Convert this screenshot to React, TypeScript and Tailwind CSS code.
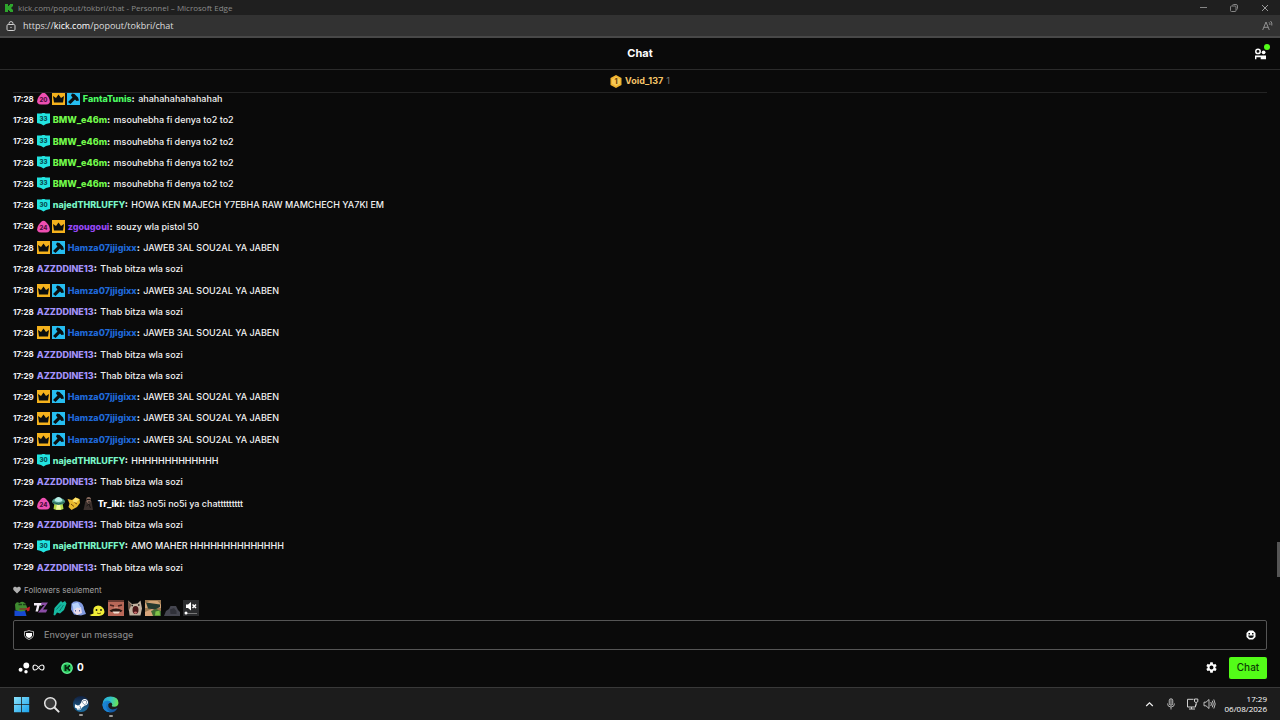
import type { ReactNode } from "react";
import { FaSteamSymbol } from "react-icons/fa";
import { MdSettings } from "react-icons/md";

type BadgeKind = "blob20" | "blob24" | "crown" | "hammer" | "shield33" | "shield30" | "alien" | "gold" | "figure";

const INK = "#0b0e0f";

function Blob({ n }: { n: string }) {
  return (
    <svg viewBox="0 0 26 26" className="size-[13px] shrink-0" aria-hidden="true">
      <path d="M8 4Q13 -1 18 4L23 10Q27 17 25 22Q23 25 18 25H8Q3 25 1 22Q-1 17 3 10Z" fill="#ee4fb2" />
      <text x="13" y="19" textAnchor="middle" fontSize="12" fontWeight="800" fontFamily="Inter, sans-serif" fill="#4b0b3c">{n}</text>
    </svg>
  );
}

function Shield({ n }: { n: string }) {
  return (
    <svg viewBox="0 0 26 26" className="size-[13px] shrink-0" aria-hidden="true">
      <path d="M0 1H9L11 0H15L17 1H26V20L18 22L13 25L8 22L0 20Z" fill="#22e4e0" />
      <text x="13" y="15" textAnchor="middle" fontSize="12" fontWeight="800" fontFamily="Inter, sans-serif" fill="#06474c">{n}</text>
    </svg>
  );
}

function Badge({ kind }: { kind: BadgeKind }) {
  switch (kind) {
    case "blob20":
      return <Blob n="20" />;
    case "blob24":
      return <Blob n="24" />;
    case "shield33":
      return <Shield n="33" />;
    case "shield30":
      return <Shield n="30" />;
    case "crown":
      return (
        <svg viewBox="0 0 26 26" className="size-[13px] shrink-0" aria-hidden="true">
          <path d="M0 0H26V26H0Z" fill="#f5b21c" />
          <path d="M2 8L8 12L13 5L18 12L24 8L22 21H4Z" fill={INK} />
        </svg>
      );
    case "hammer":
      return (
        <svg viewBox="0 0 26 26" className="size-[13px] shrink-0" aria-hidden="true">
          <path d="M0 0H26V26H0Z" fill="#26bdf0" />
          <path d="M10 3L15 4L22 11L24 17L19 18L16 15L7 24L2 20L11 11L8 7Z" fill={INK} />
        </svg>
      );
    case "alien":
      return (
        <svg viewBox="0 0 26 26" className="size-[13px] shrink-0" aria-hidden="true">
          <path d="M5 12H21L23 24L17 26H9L3 24Z" fill="#b8dc4a" />
          <path d="M10 14H16L18 25H8Z" fill="#f4f7a0" />
          <ellipse cx="13" cy="9" rx="13" ry="7" fill="#4d9a86" />
          <path d="M5 8Q7 0 13 0Q19 0 21 8Q13 12 5 8Z" fill="#b6ede5" />
          <path d="M2 11Q13 17 24 11" stroke="#245c50" strokeWidth="2" fill="none" />
        </svg>
      );
    case "gold":
      return (
        <svg viewBox="0 0 26 26" className="size-[13px] shrink-0" aria-hidden="true">
          <path d="M1 4L10 6L17 1L25 4L26 12L20 20L9 26L3 20L5 13Z" fill="#e9b92d" />
          <path d="M11 8L17 1L25 5L17 12Z" fill="#ffe56f" />
          <path d="M8 14L14 19M15 11L20 14" stroke="#7b4d0c" strokeWidth="2" />
        </svg>
      );
    case "figure":
      return (
        <svg viewBox="0 0 26 26" className="size-[13px] shrink-0" aria-hidden="true">
          <path d="M7 8L19 8L22 26H3Z" fill="#3b302d" />
          <path d="M9 2Q14-2 18 3L17 10L13 14L9 9Z" fill="#86695d" />
          <path d="M10 5H17M12 10H16M9 18L14 14L17 22" stroke="#191514" strokeWidth="2" fill="none" />
        </svg>
      );
  }
}

type User = { name: string; color: string; badges: BadgeKind[] };

const fanta: User = { name: "FantaTunis", color: "text-[#4cfb62]", badges: ["blob20", "crown", "hammer"] };
const bmw: User = { name: "BMW_e46m", color: "text-[#72f94b]", badges: ["shield33"] };
const najed: User = { name: "najedTHRLUFFY", color: "text-[#79f5c6]", badges: ["shield30"] };
const zgou: User = { name: "zgougoui", color: "text-[#9747f5]", badges: ["blob24", "crown"] };
const hamza: User = { name: "Hamza07jjigixx", color: "text-[#1f68d8]", badges: ["crown", "hammer"] };
const azz: User = { name: "AZZDDINE13", color: "text-[#a493fa]", badges: [] };
const triki: User = { name: "Tr_iki", color: "text-white", badges: ["blob24", "alien", "gold", "figure"] };

const TO2 = "msouhebha fi denya to2 to2";
const JAWEB = "JAWEB 3AL SOU2AL YA JABEN";
const THAB = "Thab bitza wla sozi";

const messages: [string, User, string][] = [
  ["17:28", fanta, "ahahahahahahahah"],
  ["17:28", bmw, TO2],
  ["17:28", bmw, TO2],
  ["17:28", bmw, TO2],
  ["17:28", bmw, TO2],
  ["17:28", najed, "HOWA KEN MAJECH Y7EBHA RAW MAMCHECH YA7KI EM"],
  ["17:28", zgou, "souzy wla pistol 50"],
  ["17:28", hamza, JAWEB],
  ["17:28", azz, THAB],
  ["17:28", hamza, JAWEB],
  ["17:28", azz, THAB],
  ["17:28", hamza, JAWEB],
  ["17:28", azz, THAB],
  ["17:29", azz, THAB],
  ["17:29", hamza, JAWEB],
  ["17:29", hamza, JAWEB],
  ["17:29", hamza, JAWEB],
  ["17:29", najed, "HHHHHHHHHHHHH"],
  ["17:29", azz, THAB],
  ["17:29", triki, "tla3 no5i no5i ya chattttttttt"],
  ["17:29", azz, THAB],
  ["17:29", najed, "AMO MAHER HHHHHHHHHHHHHH"],
  ["17:29", azz, THAB],
];

function Message({ time, user, text }: { time: string; user: User; text: string }) {
  return (
    <li className="flex items-center whitespace-nowrap">
      <time className="mr-[3px] text-[8px] font-bold">{time}</time>
      <span className="mr-[3px] flex gap-[2px] empty:hidden">
        {user.badges.map((b) => (
          <Badge key={b} kind={b} />
        ))}
      </span>
      <p className="text-[9px] font-medium">
        <span className={`font-extrabold ${user.color}`}>{user.name}</span>
        <span className="mr-[1px] font-extrabold">:</span> {text}
      </p>
    </li>
  );
}

const emotes: { name: string; art: ReactNode }[] = [
  {
    name: "Frog",
    art: (
      <>
        <path d="M1 21H22L25 32H1Z" fill="#1749d2" />
        <path d="M2 9Q5 2 11 6Q17 1 23 7L27 17Q24 23 12 23L3 20Z" fill="#3f8b30" />
        <path d="M9 9H16M18 9H24" stroke="#1d3f18" strokeWidth="3" />
        <path d="M11 18H26" stroke="#7b3b26" strokeWidth="3" />
        <path d="M24 17L32 13L31 21L27 23Z" fill="#c51d28" />
      </>
    ),
  },
  {
    name: "TZ",
    art: (
      <>
        <path d="M2 6H20L18 11H13L10 23H5L8 11H2Z" fill="#f1eaf5" />
        <path d="M17 5H30L20 19H29L26 25H10L23 10H16Z" fill="#8b4da6" />
      </>
    ),
  },
  {
    name: "Teal hands",
    art: (
      <>
        <path d="M3 30L5 16L14 6L18 2L21 5L26 2L29 7L24 20L16 27L10 25L6 31Z" fill="#16b9a0" />
        <path d="M9 19L18 9M15 22L23 10" stroke="#087b70" strokeWidth="2" />
      </>
    ),
  },
  {
    name: "Blue hair",
    art: (
      <>
        <path d="M3 7Q9 0 19 4Q27 7 28 18L32 28L22 31L8 29L2 19Z" fill="#829be0" />
        <path d="M7 14L22 14L24 26L14 30L7 24Z" fill="#e9dce9" />
        <path d="M4 8L16 5L22 17L14 15L8 20Z" fill="#b8d2fa" />
        <path d="M11 20V23M19 20V23" stroke="#5568a9" strokeWidth="2" />
      </>
    ),
  },
  {
    name: "Yellow blob",
    art: (
      <>
        <path d="M1 30L9 27Q6 12 18 11Q30 12 31 24Q30 31 20 32H5Z" fill="#f1ed38" />
        <path d="M15 18V22M24 18V22" stroke="#292814" strokeWidth="3" />
        <path d="M16 26Q20 29 24 26" stroke="#77600e" strokeWidth="2" fill="none" />
      </>
    ),
  },
  {
    name: "Laugh",
    art: (
      <>
        <path d="M0 0H32V32H0Z" fill="#b96858" />
        <path d="M0 0H32V4H0Z" fill="#693a31" />
        <path d="M4 10L12 12M20 12L28 10" stroke="#45221e" strokeWidth="3" />
        <path d="M12 14H20V17H12Z" fill="#d08a78" />
        <path d="M3 21Q16 13 29 21L26 24H6Z" fill="#2b1712" />
        <path d="M9 23H24L21 27H12Z" fill="#f2dfd1" />
      </>
    ),
  },
  {
    name: "Pop cat",
    art: (
      <>
        <path d="M2 1L10 8L21 7L27 1L30 17L27 31H5Z" fill="#c2b2a0" />
        <path d="M2 1L9 10L3 22Z" fill="#75594a" />
        <ellipse cx="17" cy="20" rx="6" ry="8" fill="#4a1618" />
        <path d="M13 25Q17 21 21 25L17 28Z" fill="#c46969" />
        <path d="M9 11H12M22 10H25" stroke="#211c1a" strokeWidth="3" />
      </>
    ),
  },
  {
    name: "Binoculars",
    art: (
      <>
        <path d="M0 0H32V32H0Z" fill="#9b7951" />
        <path d="M0 6L10 2H25L32 9V16H0Z" fill="#d3a476" />
        <path d="M2 5L30 9V14L20 19L6 17Z" fill="#263a2f" />
        <path d="M0 24L14 18L22 22L20 32H0Z" fill="#d9a57b" />
        <path d="M12 22L22 18L32 22V32H16Z" fill="#426d32" />
        <path d="M21 23L29 21L30 31H20Z" fill="#80c448" />
      </>
    ),
  },
  {
    name: "Shadow",
    art: (
      <>
        <path d="M0 32L4 22L10 18L13 12L24 12L28 20L32 24V32Z" fill="#454650" />
        <path d="M12 19L20 16L25 22V28H13Z" fill="#303139" />
      </>
    ),
  },
  {
    name: "Muted",
    art: (
      <>
        <path d="M0 0H32V32H0Z" fill="#2b2c2e" />
        <path d="M6 9H10L16 4V21L10 16H6Z" fill="#fff" />
        <path d="M19 9L26 16M26 9L19 16" stroke="#fff" strokeWidth="3" />
        <path d="M6 27H28" stroke="#777" strokeWidth="2" />
        <circle cx="6" cy="26" r="3" fill="#fff" />
      </>
    ),
  },
];

function BrowserChrome() {
  return (
    <div className="shrink-0 font-['Open_Sans','Noto_Sans',sans-serif]">
      <div className="flex h-[15px] items-center bg-[#1f1f1f] pl-[5px] text-[8px] text-[#8b8b8b]">
        <svg viewBox="0 0 16 16" className="mr-[5px] size-[8px]" aria-hidden="true">
          <path d="M0 0H6V4H8V2H10V0H16V5H14V7H12V9H14V11H16V16H10V14H8V12H6V16H0Z" fill="#2ea52c" />
        </svg>
        <span className="grow">kick.com/popout/tokbri/chat - Personnel – Microsoft Edge</span>
        <button aria-label="Réduire" className="flex w-[31px] justify-center">
          <svg viewBox="0 0 8 8" className="size-[8px]"><path d="M0 3.5H7" stroke="#858585" /></svg>
        </button>
        <button aria-label="Restaurer" className="flex w-[30px] justify-center">
          <svg viewBox="0 0 8 8" className="size-[8px]" fill="none" stroke="#858585">
            <rect x=".5" y="2" width="5.5" height="5.5" rx="1" />
            <path d="M2.5 1.5Q2.5.5 3.5.5H6Q7.5.5 7.5 2V4.5Q7.5 5.5 6.5 5.5" />
          </svg>
        </button>
        <button aria-label="Fermer" className="flex w-[31px] justify-center">
          <svg viewBox="0 0 8 8" className="size-[8px]"><path d="M1 1L7 7M7 1L1 7" stroke="#9a9a9a" /></svg>
        </button>
      </div>
      <div className="flex h-[23px] items-center border-b-2 border-[#484848] bg-[#323232] pr-[7px] pl-[6px] text-[9px] text-[#dedede]">
        <svg viewBox="0 0 10 10" className="mr-[7px] size-[10px]" fill="none" stroke="#d0d0d0" aria-hidden="true">
          <rect x="1" y="3.5" width="8" height="6" rx="1.2" />
          <path d="M3 3.5V2.5Q3 .6 5 .6Q7 .6 7 2.5V3.5" />
          <circle cx="5" cy="6.4" r=".6" fill="#d0d0d0" stroke="none" />
        </svg>
        <span className="grow">https://<span className="text-white">kick.com</span>/popout/tokbri/chat</span>
        <button aria-label="Lecture à voix haute">
          <svg viewBox="0 0 11 11" className="size-[11px]" fill="none" stroke="#9b9b9b" strokeWidth=".9">
            <path d="M.7 10L4 2L7.3 10M1.8 7.3H6.2M7 2.3Q8.2 3.3 7.9 5M8.5 1Q10.5 2.8 9.8 5.5" />
          </svg>
        </button>
      </div>
    </div>
  );
}

function Taskbar() {
  return (
    <footer className="flex h-[33px] shrink-0 items-center border-t border-[#393939] bg-[#1c1c1c] pr-[13px] pl-[13px] font-['Open_Sans','Noto_Sans',sans-serif] text-white">
      <nav className="flex grow items-center gap-[13px]">
        <button aria-label="Démarrer">
          <svg viewBox="0 0 17 17" className="size-[17px]">
            <defs>
              <linearGradient id="win" x1="0" y1="0" x2="1" y2="1">
                <stop stopColor="#8be2fb" />
                <stop offset="1" stopColor="#1ba4ec" />
              </linearGradient>
            </defs>
            <path d="M1 1H8.2V8.2H1ZM9 1H16.2V8.2H9ZM1 9H8.2V16.2H1ZM9 9H16.2V16.2H9Z" fill="url(#win)" />
          </svg>
        </button>
        <button aria-label="Rechercher">
          <svg viewBox="0 0 17 17" className="size-[17px]" fill="none" stroke="#e3e3e3">
            <circle cx="7.3" cy="7.3" r="5.6" strokeWidth="1.5" fill="#3b3b3b" />
            <path d="M11.5 11.5L15.6 15.6" strokeWidth="2" strokeLinecap="round" />
          </svg>
        </button>
        <button aria-label="Steam" className="relative flex size-[16px] items-center justify-center rounded-full bg-linear-to-b from-[#10203f] to-[#1b70a4]">
          <FaSteamSymbol className="size-[15px] text-white" />
          <span className="absolute top-[18px] left-[6px] h-[2px] w-[4px] rounded-full bg-[#9a9a9a]" />
        </button>
        <button aria-label="Microsoft Edge" className="relative">
          <svg viewBox="0 0 17 17" className="size-[17px]">
            <defs>
              <linearGradient id="edgeTop" x1="0" y1=".3" x2="1" y2=".5">
                <stop stopColor="#28a9dd" />
                <stop offset=".5" stopColor="#34c5c4" />
                <stop offset="1" stopColor="#6be454" />
              </linearGradient>
              <linearGradient id="edgeLow" x1="0" y1="0" x2="1" y2="1">
                <stop stopColor="#1a91df" />
                <stop offset="1" stopColor="#124b94" />
              </linearGradient>
            </defs>
            <path d="M.5 8.5Q1 .5 8.5.5Q16.5.5 16.5 7Q16.2 10.5 12.3 10.8Q9.5 10.8 9.8 9.7Q11 8.4 9.6 6.9Q8.3 5.6 6 5.9Q1.8 6 .5 9.5Z" fill="url(#edgeTop)" />
            <path d="M.5 9Q1.3 4.6 5.5 4.6Q8.7 4.7 9.6 6.9Q7 6.2 6.2 8.6Q5.7 11.3 8.1 12.8Q11 14.5 15.6 12Q13 16.5 8.5 16.5Q.8 16 .5 9Z" fill="url(#edgeLow)" />
            <path d="M4.6 7Q2.4 12.6 8 16.3Q1 15.8.6 9.2Q2 6.7 4.6 7Z" fill="#1c83d3" />
          </svg>
          <span className="absolute top-[19px] left-[7px] h-[2px] w-[4px] rounded-full bg-[#9a9a9a]" />
        </button>
      </nav>
      <div className="flex items-center">
        <button aria-label="Icônes masquées" className="mr-[12px]">
          <svg viewBox="0 0 9 9" className="size-[9px]" fill="none" stroke="#f0f0f0" strokeWidth="1.2"><path d="M1.2 6L4.5 2.8L7.8 6" /></svg>
        </button>
        <svg viewBox="0 0 10 12" className="mr-[10px] h-[12px] w-[10px]" fill="none" stroke="#c2c2c2" role="img" aria-label="Micro">
          <rect x="3.2" y=".7" width="3.6" height="6.6" rx="1.8" fill="#666" strokeWidth=".8" />
          <path d="M1.5 5.5Q1.5 9 5 9Q8.5 9 8.5 5.5M5 9V11.5" strokeWidth=".9" />
        </svg>
        <svg viewBox="0 0 13 12" className="mr-[4px] h-[12px] w-[13px]" fill="none" stroke="#d0d0d0" role="img" aria-label="Réseau">
          <path d="M7.5 1.3H1.5V9H9.5V6.5M3 11H9M5.5 9V11" />
          <path d="M8.5 1H11.8V3.7Q10 5.5 8.5 3.7ZM10.2 5V7.5" />
        </svg>
        <svg viewBox="0 0 13 12" className="mr-[9px] h-[12px] w-[13px]" fill="none" stroke="#d0d0d0" strokeWidth=".9" role="img" aria-label="Volume">
          <path d="M1 4.2H3L6 1.5V10.5L3 7.8H1ZM7.8 4Q9 6 7.8 8M9.3 2.7Q11.2 6 9.3 9.3M10.8 1.5Q13.6 6 10.8 10.5" />
        </svg>
        <div className="text-right text-[8px] leading-[10px]">
          <div>17:29</div>
          <div>06/08/2026</div>
        </div>
      </div>
    </footer>
  );
}

export default function App() {
  return (
    <div className="flex h-screen flex-col overflow-hidden bg-[#0a0a0a] font-['Inter',sans-serif] text-[10px] text-[#f2f2f2]">
      <BrowserChrome />
      <header className="z-10 flex h-[32px] shrink-0 items-center border-b border-[#2b2b2b] bg-[#0a0a0a] pr-[13px]">
        <span className="w-[26px]" />
        <h1 className="grow text-center text-[11px] font-bold text-white">Chat</h1>
        <button aria-label="Communauté" className="relative">
          <svg viewBox="0 0 13 12" className="h-[12px] w-[13px]" fill="#fff">
            <circle cx="4" cy="3.4" r="2.2" fill="none" stroke="#fff" strokeWidth="1.5" />
            <circle cx="9.6" cy="4.3" r="1.9" />
            <path d="M1 7.6H12V11.3H6.7V9.2H2.4V11.3H1Z" />
          </svg>
          <span className="absolute -top-[4px] left-[10px] size-[6px] rounded-full bg-[#53fc18]" />
        </button>
      </header>
      <section className="z-10 mx-[13px] flex h-[23px] shrink-0 items-center justify-center border-b border-[#242424] bg-[#0a0a0a]">
        <svg viewBox="0 0 24 26" className="mr-[3px] h-[13px] w-[12px]" aria-hidden="true">
          <path d="M12 0L23 6V20L12 26L1 20V6Z" fill="#f0b32f" />
          <path d="M12 4L20 8.500V17.500L12 22L4 17.500V8.500Z" fill="#f7c956" />
          <text x="12" y="18" textAnchor="middle" fontSize="14" fontWeight="800" fontFamily="Inter, sans-serif" fill="#754405">1</text>
        </svg>
        <span className="text-[9px] font-bold text-[#f5c469]">Void_137</span>
        <span className="ml-[3px] text-[9px] text-[#777]">1</span>
      </section>
      <main className="-mt-[5px] flex min-h-0 grow">
        <ol className="grid grow auto-rows-fr pl-[13px]">
          {messages.map(([time, user, text], i) => (
            <Message key={i} time={time} user={user} text={text} />
          ))}
        </ol>
        <div className="flex w-[3px] flex-col justify-end pb-[1px]">
          <div className="h-[35px] bg-[#555]" />
        </div>
      </main>
      <form className="shrink-0 px-[13px] pt-[6px] pb-[8px]" onSubmit={(e) => e.preventDefault()}>
        <p className="flex h-[12px] items-center gap-[3px] text-[8px] text-[#a3a3a3]">
          <svg viewBox="0 0 16 16" className="size-[8px]" aria-hidden="true">
            <path d="M8 15L1 8Q-1 3 3 1.500Q6 .5 8 3.500Q10 .5 13 1.500Q17 3 15 8Z" fill="#b0b0b0" />
          </svg>
          Followers seulement
        </p>
        <div className="mt-[4px] mb-[4px] flex w-[186px] justify-between pl-[1px]">
          {emotes.map((e) => (
            <button key={e.name} type="button" aria-label={e.name}>
              <svg viewBox="0 0 32 32" className="size-[16px]">{e.art}</svg>
            </button>
          ))}
        </div>
        <div className="flex h-[30px] items-center rounded-[2px] border border-[#555] pr-[10px] pl-[10px]">
          <button type="button" aria-label="Identité">
            <svg viewBox="0 0 20 20" className="size-[10px]" fill="none">
              <path d="M1 3Q6 3 10 1Q14 3 19 3V11Q17 17 10 19Q3 17 1 11Z" stroke="#c8c8c8" strokeWidth="1.800" />
              <path d="M4 6H16V11Q15 15 10 16Q5 15 4 11Z" fill="#fff" />
            </svg>
          </button>
          <input
            aria-label="Envoyer un message"
            placeholder="Envoyer un message"
            className="ml-[10px] min-w-0 grow bg-transparent text-[9px] font-medium outline-none placeholder:text-[#858585]"
          />
          <button type="button" aria-label="Émotes">
            <svg viewBox="0 0 20 20" className="size-[10px]">
              <path d="M6 1H14L19 6V14L14 19H6L1 14V6Z" fill="#fff" />
              <path d="M5 6H8V9H5ZM12 6H15V9H12ZM4 11H16Q15 16 10 16Q5 16 4 11Z" fill={INK} />
            </svg>
          </button>
        </div>
        <div className="mt-[6px] flex h-[23px] items-center">
          <svg viewBox="0 0 12 12" className="ml-[5px] size-[12px]" fill="#fff" aria-hidden="true">
            <circle cx="8.300" cy="3.500" r="2.900" />
            <circle cx="2.600" cy="7.800" r="2" />
            <circle cx="8" cy="9.800" r="1.700" />
          </svg>
          <svg viewBox="0 0 26 14" className="ml-[2px] h-[7px] w-[13px]" fill="none" stroke="#f3f3f3" strokeWidth="2.400" role="img" aria-label="Illimité">
            <path d="M13 7Q9 2 6 2Q2 2 2 7Q2 12 6 12Q9 12 13 7Q17 2 20 2Q24 2 24 7Q24 12 20 12Q17 12 13 7Z" />
          </svg>
          <svg viewBox="0 0 24 24" className="ml-[16px] size-[12px]" aria-hidden="true">
            <circle cx="12" cy="12" r="10.500" fill="#26c45b" stroke="#62ef94" strokeWidth="2.500" />
            <path d="M7 6H11V10H13V8H15V6H18V10H16V14H18V18H15V16H13V14H11V18H7Z" fill="#05280f" />
          </svg>
          <span className="ml-[4px] font-bold text-white">0</span>
          <button type="button" aria-label="Paramètres" className="ml-auto">
            <MdSettings className="size-[13px] text-white" />
          </button>
          <button type="submit" className="ml-[11px] h-[22px] w-[38px] rounded-[2px] bg-[#53fc18] font-medium text-[#0c3a05]">Chat</button>
        </div>
      </form>
      <Taskbar />
    </div>
  );
}
